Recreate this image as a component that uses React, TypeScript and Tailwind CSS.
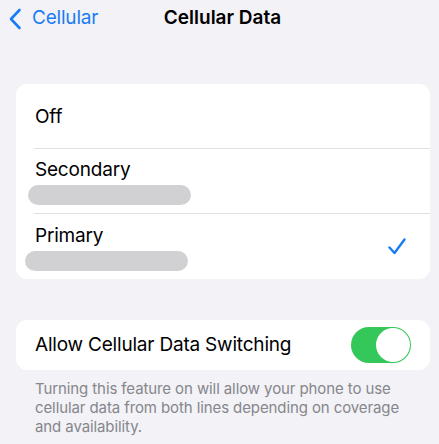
function Blob({ className = '' }: { className?: string }) {
  return <div className={`h-[20px] rounded-full bg-[#d1d1d4] ${className}`} />;
}

export default function App() {
  return (
    <div
      className="w-[439px] h-[444px] overflow-hidden bg-[#f2f2f7] text-black"
      style={{ fontFamily: 'Inter, "Liberation Sans", sans-serif' }}
    >
      {/* Nav bar */}
      <div className="relative h-[37px] flex items-center justify-center">
        <div className="absolute left-[8px] top-0 h-[37px] flex items-center text-[#1a7cf5]">
          <svg width="14" height="22" viewBox="0 0 14 22" fill="none">
            <path d="M11.5 2L3 11l8.5 9" stroke="currentColor" strokeWidth="2.6" strokeLinecap="round" strokeLinejoin="round" />
          </svg>
          <span className="ml-[10px] text-[19px] tracking-[-0.2px]">Cellular</span>
        </div>
        <span className="ml-[6px] text-[19px] font-semibold tracking-normal">Cellular Data</span>
      </div>

      {/* Options card */}
      <div className="ml-[16px] mr-[9px] mt-[47px] bg-white rounded-[11px] overflow-hidden">
        <div className="h-[64px] pl-[19px] pt-[3px] flex items-center">
          <span className="text-[19px] tracking-[-0.2px]">Off</span>
        </div>
        <div className="ml-[18px] h-px bg-[#e0e0e3]" />
        <div className="h-[64px] pl-[12px] flex flex-col justify-center">
          <span className="pl-[7px] text-[19px] tracking-[-0.2px] leading-[22px] mt-[2px]">Secondary</span>
          <Blob className="w-[163px] mt-[4px]" />
        </div>
        <div className="ml-[18px] h-px bg-[#e0e0e3]" />
        <div className="h-[65px] pl-[9px] pr-[24px] flex items-center justify-between">
          <div className="flex flex-col mt-[2px]">
            <span className="pl-[10px] text-[19px] tracking-[-0.2px] leading-[22px]">Primary</span>
            <Blob className="w-[163px] mt-[4px]" />
          </div>
          <svg width="18" height="17" viewBox="0 0 18 17" fill="none" className="text-[#1a7cf5]">
            <path d="M1.5 9.5l5 5.5L16.5 1.5" stroke="currentColor" strokeWidth="2.4" strokeLinecap="round" strokeLinejoin="round" />
          </svg>
        </div>
      </div>

      {/* Switch card */}
      <div className="ml-[16px] mr-[9px] mt-[41px] bg-white rounded-[11px] h-[50px] pl-[19px] pr-[19px] flex items-center justify-between">
        <span className="text-[19px] tracking-[-0.2px]">Allow Cellular Data Switching</span>
        <div className="w-[60px] h-[36px] rounded-full bg-[#34c759] flex items-center justify-end pr-[1px]">
          <div className="w-[34px] h-[34px] rounded-full bg-white" />
        </div>
      </div>

      <p className="mx-[35px] mt-[9px] text-[15px] leading-[19px] text-[#86868b] tracking-[-0.1px]">
        Turning this feature on will allow your phone to use cellular data from both lines depending on coverage and availability.
      </p>
    </div>
  );
}
